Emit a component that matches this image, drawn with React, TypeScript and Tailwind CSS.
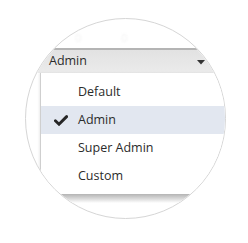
import React from "react";

export default function App() {
  const items = ["Default", "Admin", "Super Admin", "Custom"];
  return (
    <div className="w-[248px] h-[243px] bg-white pt-[18px] pl-[25px]" style={{ fontFamily: '"Open Sans", sans-serif' }}>
      <div className="relative w-[201px] h-[201px] rounded-full overflow-hidden border border-[#d6d6d6] bg-white">
        <div className="w-[260px] -ml-px -mt-px">
          <div className="h-[30px] flex items-end pb-[2px] pl-[50px] gap-[40px] text-[11px] text-[#f2f2f2] blur-[1px]">
            <span>0</span>
            <span>0</span>
          </div>
          <div className="h-[25px] border-t-2 border-[#b4b4b4] bg-gradient-to-b from-[#e2e2e2] to-[#ebebeb] flex items-center pl-[24px] text-[12.5px] text-[#2b2b2b]">
            <span className="w-[148px]">Admin</span>
            <svg width="8" height="5" viewBox="0 0 8 5" className="mt-[1px]">
              <polygon points="0,0 8,0 4,4.5" fill="#333" />
            </svg>
          </div>
          <div className="flex">
            <div className="w-[15px] shrink-0" />
            <div className="flex-1">
              <div className="bg-white border-l border-[#cfcfcf] pt-[5px] pb-[4px] shadow-[-1px_0_2px_rgba(0,0,0,0.08)]">
                {items.map((it) => (
                  <div
                    key={it}
                    className={`h-[28px] flex items-center text-[12.5px] text-[#2b2b2b] ${it === "Admin" ? "bg-[#e2e7f0]" : ""}`}
                  >
                    <div className="w-[37px] flex justify-end pr-[10px]">
                      {it === "Admin" && (
                        <svg width="14" height="11" viewBox="0 0 14 11">
                          <path d="M1.4 5.8 L5 9.2 L12.6 1.6" stroke="#262626" strokeWidth="2.9" fill="none" strokeLinecap="round" strokeLinejoin="miter" />
                        </svg>
                      )}
                    </div>
                    <span>{it}</span>
                  </div>
                ))}
              </div>
              <div className="h-[9px] bg-gradient-to-b from-[#b4b4b4] via-[#d8d8d8] to-white" />
            </div>
          </div>
        </div>
      </div>
    </div>
  );
}
